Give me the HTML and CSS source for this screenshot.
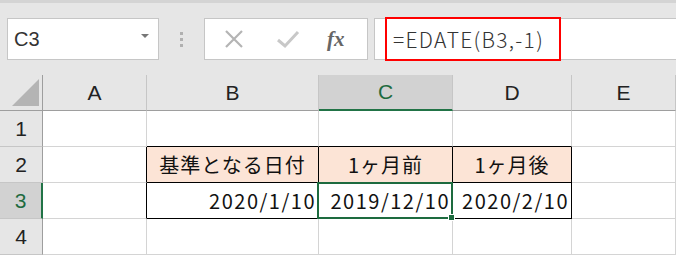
FILE: index.html
```html
<!DOCTYPE html>
<html>
<head>
    <title>EDATE</title>
    <link rel="stylesheet" href="styles.css">
</head>
<body>
    <div class="toolbar">
        <div class="name-box">
            <span>C3</span>
            <span class="caret"></span>
        </div>
        <div class="grip"><i></i><i></i><i></i></div>
        <div class="fx-buttons">
            <svg class="icon" width="22" height="22" viewBox="0 0 22 22">
                <path d="M3 3 L19 19 M19 3 L3 19" stroke="#b4b4b4" stroke-width="2.2" fill="none"/>
            </svg>
            <svg class="icon" width="24" height="22" viewBox="0 0 24 22">
                <path d="M2 12 L9 18 L22 4" stroke="#c8c8c8" stroke-width="3" fill="none"/>
            </svg>
            <span class="fx">fx</span>
        </div>
        <div class="formula-bar">
            <div class="formula">=EDATE(B3,-1)</div>
        </div>
    </div>

    <div class="sheet">
        <div class="corner"><span class="tri"></span></div>
        <div class="col-head">A</div>
        <div class="col-head">B</div>
        <div class="col-head active">C</div>
        <div class="col-head">D</div>
        <div class="col-head">E</div>

        <div class="row-head">1</div>
        <div class="cell"></div>
        <div class="cell bb"></div>
        <div class="cell bb"></div>
        <div class="cell bb"></div>
        <div class="cell"></div>

        <div class="row-head">2</div>
        <div class="cell br"></div>
        <div class="cell boxed fill center">基準となる日付</div>
        <div class="cell boxed fill center">1ヶ月前</div>
        <div class="cell boxed fill center">1ヶ月後</div>
        <div class="cell"></div>

        <div class="row-head active">3</div>
        <div class="cell br"></div>
        <div class="cell boxed right">2020/1/10</div>
        <div class="cell boxed right selected">2019/12/10</div>
        <div class="cell boxed right">2020/2/10</div>
        <div class="cell"></div>

        <div class="row-head">4</div>
        <div class="cell"></div>
        <div class="cell"></div>
        <div class="cell"></div>
        <div class="cell"></div>
        <div class="cell"></div>
    </div>
</body>
</html>
```

FILE: styles.css
```css
body {
    margin: 0;
    width: 676px;
    height: 255px;
    overflow: hidden;
    background: #fff;
    font-family: "Noto Sans CJK JP", "Noto Sans", sans-serif;
}
.toolbar {
    height: 75px;
    box-sizing: border-box;
    background: #e6e6e6;
    border-top: 3px solid #d4d4d4;
    padding: 15px 0 0 7px;
    display: flex;
    align-items: flex-start;
}
.name-box {
    width: 152px;
    height: 42px;
    box-sizing: border-box;
    background: #fff;
    border: 1px solid #c6c6c6;
    display: flex;
    align-items: center;
    justify-content: space-between;
    padding: 0 9px 0 6px;
    font-family: "Liberation Sans", Arial, sans-serif;
    font-size: 20px;
    color: #333;
}
.caret {
    width: 0;
    height: 0;
    border-left: 4px solid transparent;
    border-right: 4px solid transparent;
    border-top: 4px solid #777;
    margin-bottom: 6px;
}
.grip {
    width: 45px;
    height: 42px;
    display: flex;
    flex-direction: column;
    align-items: center;
    justify-content: center;
    gap: 3px;
}
.grip i {
    width: 3px;
    height: 3px;
    background: #b0b0b0;
}
.fx-buttons {
    width: 164px;
    height: 42px;
    box-sizing: border-box;
    background: #fff;
    border: 1px solid #c6c6c6;
    display: flex;
    align-items: center;
    padding-left: 18px;
    gap: 31px;
}
.fx {
    font-family: "Liberation Serif", "DejaVu Serif", serif;
    font-style: italic;
    font-weight: bold;
    font-size: 21px;
    color: #666;
    margin-left: -4px;
}
.formula-bar {
    flex: 1;
    height: 42px;
    box-sizing: border-box;
    background: #fff;
    border: 1px solid #c6c6c6;
    border-right: none;
    margin-left: 6px;
    padding-left: 10px;
}
.formula {
    width: 176px;
    height: 44px;
    box-sizing: border-box;
    margin-top: -2px;
    border: 2px solid #ff0000;
    font-size: 21px;
    line-height: 40px;
    padding-left: 6px;
    letter-spacing: 1.3px;
    color: #333;
    font-weight: 300;
}
.sheet {
    display: grid;
    grid-template-columns: 43px 104px 172px 134px 119px 104px;
    grid-template-rows: repeat(5, 36px);
    font-size: 20px;
}
.corner, .col-head, .row-head {
    background: #e6e6e6;
    box-sizing: border-box;
    display: flex;
    align-items: center;
    justify-content: center;
    color: #222;
}
.corner {
    border-right: 1px solid #9e9e9e;
    border-bottom: 1px solid #9e9e9e;
    position: relative;
}
.tri {
    position: absolute;
    left: 12px;
    bottom: 4px;
    width: 0;
    height: 0;
    border-left: 27px solid transparent;
    border-bottom: 27px solid #b4b4b4;
}
.col-head {
    border-right: 1px solid #c6c6c6;
    border-bottom: 1px solid #9e9e9e;
    font-family: "Liberation Sans", Arial, sans-serif;
    font-size: 21px;
}
.row-head {
    border-right: 1px solid #9e9e9e;
    border-bottom: 1px solid #c6c6c6;
    font-family: "Liberation Sans", Arial, sans-serif;
    font-size: 21px;
}
.col-head.active {
    background: #d2d2d2;
    border-bottom: 2px solid #217346;
    color: #1e6b40;
}
.row-head.active {
    background: #d2d2d2;
    border-right: 2px solid #217346;
    color: #1e6b40;
}
.cell {
    box-sizing: border-box;
    border-right: 1px solid #d4d4d4;
    border-bottom: 1px solid #d4d4d4;
    display: flex;
    align-items: center;
    color: #111;
    white-space: nowrap;
}
.cell.bb {
    border-bottom-color: #000;
}
.cell.br {
    border-right-color: #000;
}
.cell.boxed {
    border-right-color: #000;
    border-bottom-color: #000;
}
.cell.fill {
    background: #fce4d6;
}
.center {
    justify-content: center;
    letter-spacing: 1px;
}
.right {
    justify-content: flex-end;
    padding-right: 2px;
    letter-spacing: 1.5px;
}
.selected {
    position: relative;
}
.selected::before {
    content: "";
    position: absolute;
    left: -2px;
    top: -1px;
    right: -1px;
    bottom: -1px;
    border: 2px solid #1d6b3f;
}
.selected::after {
    content: "";
    position: absolute;
    right: -3px;
    bottom: -3px;
    width: 5px;
    height: 5px;
    background: #1d6b3f;
    border: 1px solid #fff;
}
```
